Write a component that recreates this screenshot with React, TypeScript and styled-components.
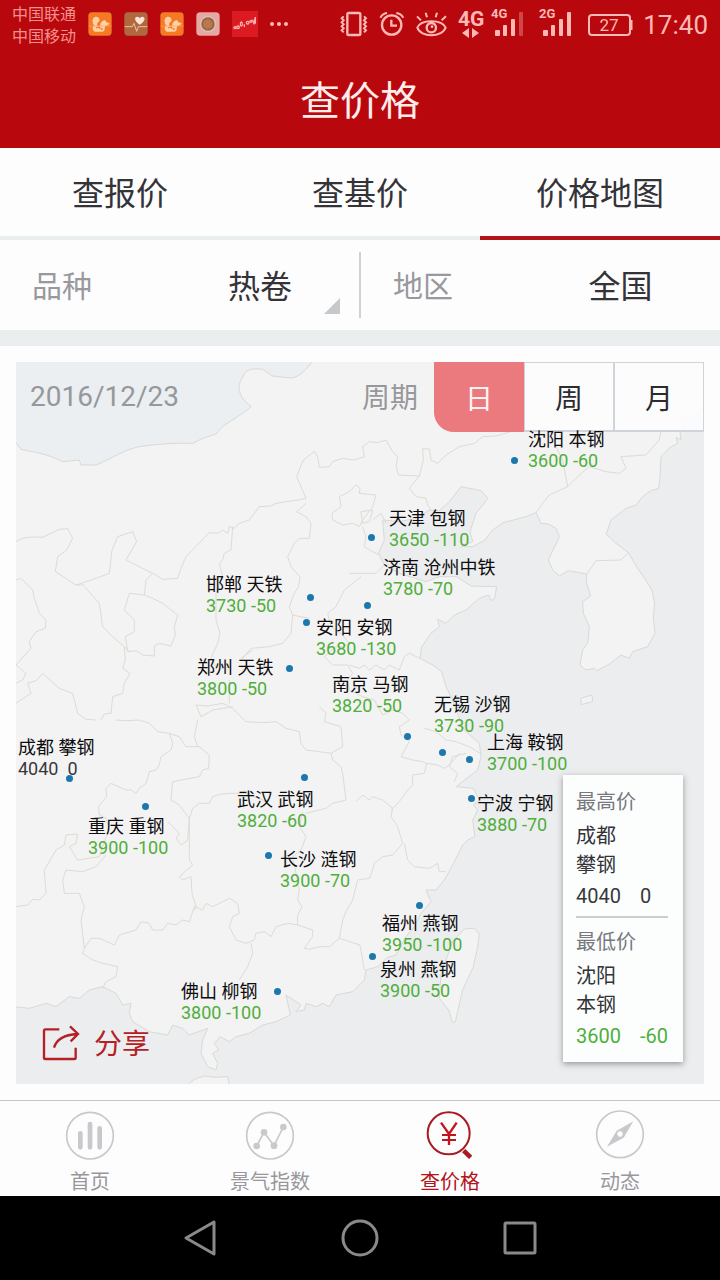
import { useState } from "react";
import styled, { createGlobalStyle } from "styled-components";

const MAP_WIDTH = 688;
const MAP_HEIGHT = 722;

const tabs = ["查报价", "查基价", "价格地图"];
const periods = ["日", "周", "月"];

interface City {
  name: string;
  price: string;
  flat?: boolean;
  dot: [number, number];
  label: [number, number];
}

const cities: City[] = [
  { name: "沈阳 本钢", price: "3600 -60", dot: [499, 99], label: [512, 67] },
  { name: "天津 包钢", price: "3650 -110", dot: [356, 176], label: [373, 146] },
  { name: "济南 沧州中铁", price: "3780 -70", dot: [352, 244], label: [367, 195] },
  { name: "邯郸 天铁", price: "3730 -50", dot: [295, 236], label: [190, 212] },
  { name: "安阳 安钢", price: "3680 -130", dot: [291, 261], label: [300, 255] },
  { name: "郑州 天铁", price: "3800 -50", dot: [274, 307], label: [181, 295] },
  { name: "南京 马钢", price: "3820 -50", dot: [392, 375], label: [316, 312] },
  { name: "无锡 沙钢", price: "3730 -90", dot: [427, 391], label: [418, 332] },
  { name: "上海 鞍钢", price: "3700 -100", dot: [454, 398], label: [471, 370] },
  { name: "宁波 宁钢", price: "3880 -70", dot: [456, 437], label: [461, 431] },
  { name: "成都 攀钢", price: "4040  0", flat: true, dot: [54, 417], label: [2, 375] },
  { name: "重庆 重钢", price: "3900 -100", dot: [130, 445], label: [72, 454] },
  { name: "武汉 武钢", price: "3820 -60", dot: [289, 416], label: [221, 427] },
  { name: "长沙 涟钢", price: "3900 -70", dot: [253, 494], label: [264, 487] },
  { name: "福州 燕钢", price: "3950 -100", dot: [404, 544], label: [366, 551] },
  { name: "泉州 燕钢", price: "3900 -50", dot: [357, 595], label: [364, 597] },
  { name: "佛山 柳钢", price: "3800 -100", dot: [262, 630], label: [165, 619] },
];

// outlines are drawn on a grid three times as fine as the map itself
const mainland =
  "M-10 -10H2080V130L2010 190 1992 215 1995 240 1980 232 1985 250 1962 262 1935 290 1932 350 1928 385 1905 392 1880 410 1860 435 1830 445 1785 480 1775 510 1770 522 1800 550 1837 578 1862 620 1882 650 1908 690 1916 730 1912 770 1917 820 1895 860 1850 875 1840 895 1815 885 1780 912 1742 932 1735 925 1710 930 1692 916 1700 870 1716 848 1720 800 1702 760 1700 725 1724 708 1712 670 1712 642 1690 638 1657 632 1630 648 1610 630 1597 600 1630 530 1620 505 1597 492 1575 490 1560 458 1530 470 1500 478 1462 488 1430 510 1407 540 1370 560 1335 560 1370 545 1362 515 1380 460 1416 415 1395 392 1335 380 1300 425 1270 452 1240 450 1200 475 1150 485 1100 480 1105 540 1087 580 1105 615 1150 640 1230 665 1270 650 1322 650 1365 678 1442 680 1436 715 1425 722 1418 705 1390 715 1350 750 1315 765 1290 790 1265 778 1270 800 1245 820 1217 860 1212 895 1250 915 1277 935 1290 980 1305 1010 1320 1050 1345 1110 1390 1150 1395 1190 1385 1230 1320 1280 1372 1285 1390 1320 1372 1335 1385 1350 1370 1380 1377 1430 1355 1440 1340 1455 1310 1515 1285 1560 1260 1590 1230 1590 1245 1625 1215 1660 1195 1700 1170 1730 1140 1785 1115 1792 1085 1820 1050 1830 1045 1860 1010 1895 960 1905 940 1940 920 1930 900 1940 870 1930 865 1950 840 1955 855 1935 810 1905 823 1965 780 1985 740 1995 700 2020 660 2030 640 2045 612 2030 595 2050 608 2070 590 2080 605 2110 600 2130 575 2120 555 2080 560 2040 575 2005 520 2025 500 2005 470 1995 455 2025 400 2015 350 1985 340 1960 345 1930 320 1935 300 1900 260 1880 220 1890 190 1915 160 1910 120 1940 90 1930 40 1945 -10 1940Z";

const mongolia =
  "M-10 -10H900C865 40 845 52 825 54L770 48 740 28C715 25 690 25 682 48 665 70 665 95 683 120L705 140C695 152 670 165 650 180L625 195 600 222 560 235 530 250C480 248 420 252 370 260 320 270 290 295 240 315L195 315 190 300 140 305C110 290 80 280 50 275L15 268 -10 235Z";

const islands = [
  "M1345 1707 1375 1705 1390 1722 1385 1760 1372 1820 1340 1890 1318 1985 1310 1988 1298 1950 1270 1915 1275 1840 1310 1745Z",
  "M1695 1015 1728 1005 1730 1025 1695 1034Z",
  "M510 2182C530 2155 545 2155 565 2148L600 2152 635 2150 642 2182Z",
];

const borders = [
  // north and the gulf provinces
  "M0 545C20 530 50 530 80 532L130 508 155 506 170 535 152 570 125 590 118 635 180 675 240 655 280 640 288 570 305 530 350 515 362 545 330 600 410 640 440 658 485 655 495 625 510 590 580 518 605 520 620 510 635 520 640 500 655 505 670 490 700 480 730 440 765 438 780 430 845 420 870 415 842 350 862 300 895 275 905 290 910 322 940 320 950 305 980 295 1015 300 1045 290 1040 260 1060 245 1085 248 1110 240 1130 275 1145 290 1140 320 1148 345 1210 348 1222 300 1220 265 1240 268 1245 300 1265 310 1290 285 1330 260 1375 250 1400 230 1440 228 1500 210",
  "M1212 345 1180 385 1200 410 1230 415 1235 435 1245 450M1620 260 1640 300 1655 380 1600 405 1580 430 1560 458M1655 380 1690 345 1720 320 1770 335 1810 340 1830 325 1815 290 1890 285 1930 240 1935 210M1712 642 1740 602 1815 600 1837 578M1400 20 1405 90 1470 120 1500 180",
  "M870 430 842 455 870 470 885 490 880 535 850 535 835 550 815 590 825 620 852 650 848 680 835 700 820 740 830 765 880 775M830 765 825 820 800 850 760 860 705 865 680 895",
  "M650 500 645 570 625 580 620 600 610 610 620 650 600 700 600 780 612 820 605 850 585 895 600 920",
  "M1020 375 1032 385 1030 400 1080 405 1070 440 1040 480 1030 500 1010 490 980 495 950 480 948 460 975 440 970 410 1000 395ZM1035 455 1070 450 1060 485 1040 490ZM1070 480 1095 460 1110 490M1000 640 1080 640 1105 615M1040 500 1050 530 1045 560 1070 575 1090 585M1035 650 985 690 960 740 935 760 945 800 980 825 1000 850 980 860 960 860 925 890 950 915 995 915",
  "M0 660 15 655 50 690 55 715 70 760 90 780 88 805 60 815 40 845 45 865 0 915 30 940 20 960 0 970M205 680 250 730 260 800 290 830 325 860 328 900 320 925 342 940 325 970 320 1000 290 1010 285 1060 265 1062 255 1080M180 675 205 675",
  "M410 640 390 660 385 705 340 700 325 750 355 780 355 815 328 830 335 875 360 872 380 885 415 888 415 858 430 850 465 858 478 825 475 800 485 765 440 730 410 715 385 705M325 860 340 875M0 1030 45 1000 35 970 60 962 80 940 130 985 170 1000 185 1060 210 1078 240 1080",
  // yangtze basin
  "M540 1035 575 1038 620 1030 650 1045 690 1085 740 1088 780 1085 810 1105 850 1115 855 1150 870 1170 910 1175 945 1180 950 1200 975 1220 980 1240 990 1320 950 1330 930 1345 870 1360",
  "M640 1030 640 960M540 1035 555 1070 590 1050 650 1040M675 895 710 870M910 1040 930 1060 925 1085 975 1100 980 1160 945 1180",
  "M1000 915 1030 925 1045 915 1060 930 1080 915 1105 930 1120 915 1150 930 1165 890 1180 880 1212 895M995 915 1010 940 995 960 1000 990 1040 1010 1075 1020 1100 1065 1130 1050 1160 1060 1180 1080 1150 1100 1155 1125 1180 1145 1155 1190 1190 1200 1220 1205 1232 1210",
  "M300 1080 330 1082 370 1080 400 1090 425 1115 460 1120 470 1150 465 1170 435 1190 430 1215 420 1230 400 1235 390 1270 370 1285 360 1300 345 1290 330 1290 285 1270 270 1285 272 1310 247 1340 250 1365 270 1375 280 1410 270 1430 250 1490 185 1500 160 1460 180 1450 185 1422 150 1425 145 1455 120 1470 85 1530 90 1600 70 1620 50 1618 35 1635 0 1640",
  "M460 1120 490 1130 510 1160 550 1160 580 1185 578 1225 560 1230 550 1250 470 1265 465 1320 490 1335 520 1375 515 1440 495 1455 480 1435 490 1420 470 1400 455 1385",
  "M520 1375 530 1345 550 1330 580 1330 590 1310 615 1302 640 1300 690 1300 740 1320 770 1345M545 1160 535 1130 545 1080M520 1375 520 1500 530 1515 490 1550 500 1560 525 1550 528 1600 540 1640 535 1650",
  "M270 1485 240 1520 200 1535 150 1530 140 1560 145 1600 190 1600 205 1640 195 1680 205 1765 225 1735 250 1735 295 1755 310 1725 360 1710 375 1685 400 1690 410 1710 440 1710 455 1690 480 1695 500 1680 520 1685 535 1640 560 1650 570 1630 590 1640 620 1625 640 1615 665 1630 670 1660 650 1670 640 1700 660 1740 690 1750 715 1740 720 1720 745 1715 765 1730 780 1700 815 1690 845 1695",
  "M860 1355 850 1400 870 1430 855 1470 830 1490 850 1590 845 1620 858 1640 845 1665 845 1695 890 1710 890 1730 865 1765 880 1768 910 1760 940 1760 970 1735 980 1680 990 1655 1010 1620 1025 1560 1060 1555 1070 1530 1075 1510 1100 1490 1130 1485 1160 1450 1145 1400 1125 1370 1130 1345 1100 1320 1070 1310 1060 1320 1040 1305 1020 1325",
  "M705 1750 710 1780 695 1820 670 1860M205 1765 200 1780 230 1800 260 1810 305 1820 300 1850 270 1865 260 1885M970 1735 1032 1755 1045 1830",
  "M1125 1350 1150 1325 1175 1290 1190 1275 1190 1245 1225 1240 1232 1210 1265 1215 1285 1225 1300 1215 1330 1180M1165 1450 1175 1500 1195 1520 1240 1525 1265 1510 1270 1535 1290 1535M1225 1105 1260 1115 1290 1140 1320 1145 1360 1160 1392 1180M1315 1265 1325 1240 1300 1220 1310 1190 1350 1180",
];

const GlobalStyle = createGlobalStyle`
  * {
    box-sizing: border-box;
  }

  body {
    margin: 0;
    background: #fdfdfe;
    color: #333338;
    font-family: Roboto, "Noto Sans CJK SC", sans-serif;
  }

  button,
  select {
    margin: 0;
    padding: 0;
    border: 0;
    background: none;
    color: inherit;
    font: inherit;
    cursor: pointer;
  }
`;

const Page = styled.div`
  display: flex;
  flex-direction: column;
  min-height: 100vh;
`;

const TopArea = styled.header`
  background: #b8080e;
  color: #ffb9b4;
`;

const StatusBar = styled.div`
  display: flex;
  align-items: center;
  justify-content: space-between;
  height: 48px;
  padding: 0 12px;
`;

const StatusGroup = styled.div<{ $gap: number }>`
  display: flex;
  align-items: center;
  gap: ${(props) => props.$gap}px;

  svg {
    display: block;
    flex: none;
    overflow: visible;
  }
`;

const Carriers = styled.div`
  padding-top: 4px;
  color: #f5908d;
  font-size: 16px;
  line-height: 22px;
`;

const Clock = styled.time`
  padding-top: 2px;
  font-size: 26px;
  line-height: 32px;
`;

const Title = styled.h1`
  margin: 0;
  height: 100px;
  color: #ffeceb;
  font-size: 40px;
  font-weight: 400;
  line-height: 108px;
  text-align: center;
`;

const Tabs = styled.nav`
  display: grid;
  grid-template-columns: repeat(3, 1fr);
`;

const Tab = styled.button<{ $active: boolean }>`
  height: 92px;
  padding-top: 4px;
  border-bottom: 4px solid ${(props) => (props.$active ? "#b01318" : "#ebeeef")};
  font-size: 32px;
  line-height: 40px;
`;

const Filters = styled.div`
  display: grid;
  grid-template-columns: 1fr 1fr;
  padding: 12px 0;
  border-bottom: 16px solid #ebeeef;
`;

const Filter = styled.div`
  display: flex;
  align-items: center;
  height: 66px;
  padding-left: 32px;

  & + & {
    margin-left: -1px;
    border-left: 2px solid #cfd2d5;
  }
`;

const FilterLabel = styled.label`
  width: 128px;
  padding-top: 4px;
  color: #99999d;
  font-size: 30px;
  line-height: 40px;
`;

const FilterSelect = styled.select`
  flex: 1;
  min-width: 0;
  height: 66px;
  padding-top: 4px;
  appearance: none;
  font-size: 32px;
  text-align: center;
  text-align-last: center;
`;

const Corner = styled.svg`
  align-self: flex-end;
  width: 16px;
  height: 16px;
  margin: 0 20px 4px -36px;
  pointer-events: none;
`;

const MapArea = styled.main`
  position: relative;
  display: flex;
  flex-direction: column;
  justify-content: space-between;
  margin: 16px;
  aspect-ratio: ${MAP_WIDTH} / ${MAP_HEIGHT};
  background: #ebedee;
`;

const MapDrawing = styled.svg`
  position: absolute;
  inset: 0;
  width: 100%;
  height: 100%;
`;

const MapToolbar = styled.div`
  position: relative;
  display: flex;
  align-items: center;
  height: 70px;
  padding-left: 14px;
  color: #96989c;
  font-size: 28px;
  line-height: 32px;
`;

const PeriodLabel = styled.span`
  margin-left: auto;
  padding: 4px 16px 0 0;
`;

const PeriodButton = styled.button<{ $active: boolean }>`
  width: 90px;
  height: 70px;
  padding-top: 6px;
  border: 1px solid ${(props) => (props.$active ? "#ea7a7d" : "#cfd3da")};
  border-bottom-width: 2px;
  border-radius: ${(props) => (props.$active ? "0 0 0 20px" : "0")};
  background: ${(props) => (props.$active ? "#ea7a7d" : "rgba(253, 253, 254, 0.85)")};
  color: ${(props) => (props.$active ? "#fff3f2" : "#2b2b30")};
`;

const Place = styled.div<{ $x: number; $y: number }>`
  position: absolute;
  left: ${(props) => (props.$x / MAP_WIDTH) * 100}%;
  top: ${(props) => (props.$y / MAP_HEIGHT) * 100}%;
`;

const Dot = styled(Place)`
  width: 7px;
  height: 7px;
  margin: -4px 0 0 -4px;
  border-radius: 50%;
  background: #1b78ad;
`;

const CityLabel = styled(Place)`
  color: #0d0d0f;
  font-size: 18px;
  line-height: 21px;
  white-space: pre;
`;

const Price = styled.div<{ $flat?: boolean }>`
  color: ${(props) => (props.$flat ? "#38383c" : "#4fae3c")};
`;

const Share = styled.button`
  position: relative;
  display: flex;
  align-items: center;
  align-self: flex-start;
  gap: 14px;
  height: 40px;
  margin: 0 0 21px 26px;
  color: #b52026;
  font-size: 28px;
  line-height: 32px;

  span {
    padding-top: 4px;
  }
`;

const Summary = styled.aside`
  position: absolute;
  right: 21px;
  bottom: 22px;
  width: 120px;
  padding: 13px 15px 11px 13px;
  background: #fcfefe;
  box-shadow: 0 2px 6px rgba(60, 64, 70, 0.5);
  font-size: 20px;
  line-height: 29px;
`;

const SummaryBlock = styled.section`
  & + & {
    margin-top: 5px;
    padding-top: 10px;
    border-top: 2px solid #cbced0;
  }
`;

const SummaryTitle = styled.h2`
  margin: 0 0 6px;
  color: #77787c;
  font-size: 20px;
  font-weight: 400;
  line-height: 28px;
`;

const SummaryPrice = styled(Price)`
  display: grid;
  grid-template-columns: 64px 1fr;
  padding-top: 2px;
  white-space: nowrap;
`;

const BottomNav = styled.nav`
  display: grid;
  grid-template-columns: 9fr 9fr 9fr 8fr;
  height: 96px;
  padding-right: 20px;
  border-top: 1px solid #c5c5c9;
`;

const NavLink = styled.a<{ $active?: boolean }>`
  display: flex;
  flex-direction: column;
  align-items: center;
  gap: 10px;
  padding-top: 9px;
  color: ${(props) => (props.$active ? "#b3141c" : "#98989c")};
  font-size: 20px;
  line-height: 24px;
  text-decoration: none;

  svg {
    color: ${(props) => (props.$active ? "#a91a22" : "#c9c9cd")};
  }
`;

const SystemBar = styled.footer`
  display: flex;
  flex: 1;
  align-items: center;
  justify-content: center;
  min-height: 84px;
  background: #000;
`;

const SystemButton = styled.button`
  display: flex;
  align-items: center;
  justify-content: center;
  width: 160px;
  height: 84px;
  color: #8a8a8c;
`;

function UcIcon() {
  return (
    <svg width="24" height="24" viewBox="0 0 72 72">
      <rect x="1" y="1" width="70" height="70" rx="11" fill="#f57a26" />
      <path
        d="M14 30C11 15 29 9 34 21 38 31 24 30 28 40 31 45 38 43 37 36 40 28 46 24 52 25L55 31 65 34C62 40 57 41 52 42L50 47C52 52 48 58 44 59H20C10 52 14 43 20 40 15 38 14 34 14 30Z"
        fill="#ffd0a4"
      />
      <path d="M25 48C31 43 36 45 36 51M42 48V54" fill="none" stroke="#f57a26" strokeWidth="4" />
      <path d="M2 42H70" stroke="#f9a568" strokeWidth="2" />
    </svg>
  );
}

function HealthIcon() {
  return (
    <svg width="24" height="24" viewBox="0 0 72 72">
      <rect x="1" y="1" width="70" height="70" rx="11" fill="#b0693f" />
      <path d="M47 38C27 24 33 14 40 14 45 14 47 19 47 19 47 19 50 14 55 14 63 14 67 25 47 38Z" fill="#ffe5d8" />
      <path d="M2 44H25L30 34 38 58 43 44H70" fill="none" stroke="#ebc0a1" strokeWidth="3" />
    </svg>
  );
}

function CameraIcon() {
  return (
    <svg width="24" height="24" viewBox="0 0 72 72">
      <rect x="1" y="1" width="70" height="70" rx="12" fill="#e5a8a4" />
      <circle cx="36" cy="36" r="24" fill="#d9c4b8" />
      <circle cx="36" cy="36" r="20" fill="#a0603c" />
      <path d="M22 28 36 20 50 30 48 46 34 52 22 44Z" fill="#b97850" />
    </svg>
  );
}

function TrendIcon() {
  return (
    <svg width="26" height="26" viewBox="0 0 78 78">
      <rect width="78" height="78" fill="#dc1a22" />
      <g fill="none" stroke="#ffb0aa" strokeWidth="4">
        <circle cx="9" cy="50" r="3" />
        <circle cx="18" cy="49" r="4" />
        <ellipse cx="28" cy="39" rx="3" ry="6" />
        <path d="M37 40V48" />
        <circle cx="47" cy="35" r="4" />
        <circle cx="57" cy="31" r="3" />
        <path d="M62 26 66 40 70 18V38" />
      </g>
    </svg>
  );
}

function DotsIcon() {
  return (
    <svg width="19" height="6" viewBox="0 0 19 6" fill="currentColor">
      <circle cx="2" cy="3" r="2" />
      <circle cx="9" cy="3" r="2" />
      <circle cx="16" cy="3" r="2" />
    </svg>
  );
}

function VibrateIcon() {
  return (
    <svg width="28" height="26" viewBox="0 0 84 78" fill="none" stroke="currentColor" strokeWidth="6">
      <rect x="22" y="6" width="39" height="66" rx="4" strokeWidth="7" />
      <path d="M11 16 5 22 11 28 5 34 11 40 5 46 11 52 5 58 11 64M72 16 78 22 72 28 78 34 72 40 78 46 72 52 78 58 72 64" />
    </svg>
  );
}

function AlarmIcon() {
  return (
    <svg width="26" height="26" viewBox="0 0 78 78" fill="none" stroke="currentColor" strokeWidth="7">
      <circle cx="38" cy="42" r="29" />
      <path d="M37 26V44H54" />
      <path d="M4 20C10 10 16 7 24 6M52 6C60 7 68 12 73 20" strokeWidth="6" />
    </svg>
  );
}

function EyeIcon() {
  return (
    <svg width="31" height="26" viewBox="0 0 93 78" fill="none" stroke="currentColor" strokeWidth="6">
      <path d="M4 50C14 24 78 24 89 50 78 80 14 80 4 50Z" />
      <circle cx="46" cy="50" r="14" strokeWidth="7" />
      <circle cx="48" cy="47" r="4" fill="currentColor" stroke="none" />
      <path d="M15 28 3 16M33 19 29 5M59 19 63 5M77 28 90 16" />
    </svg>
  );
}

function DataIcon() {
  return (
    <svg width="22" height="32" viewBox="0 0 22 32" fill="currentColor">
      <text x="0" y="18" fontSize="21" fontWeight="700">
        4G
      </text>
      <path d="M4 25 11 20V30ZM21 25 14 20V30Z" />
    </svg>
  );
}

function SignalIcon({ type, weak }: { type: string; weak?: boolean }) {
  return (
    <svg width="37" height="32" viewBox="0 0 37 32" fill="currentColor">
      <text x="0" y="10" fontSize="13" fontWeight="700">
        {type}
      </text>
      <rect x="4" y="22" width="5" height="6" rx="1" />
      <rect x="12" y="17" width="4" height="11" rx="1" />
      <rect x="20" y="11" width="4" height="17" rx="1" />
      <rect x="28" y="4" width="4" height="24" rx="1" opacity={weak ? 0.35 : 1} />
    </svg>
  );
}

function BatteryIcon() {
  return (
    <svg width="45" height="24" viewBox="0 0 45 24" fill="none" stroke="currentColor" strokeWidth="2">
      <rect x="2" y="3" width="41" height="20" rx="3" />
      <path d="M44 8V18" strokeWidth="3" />
      <text x="22" y="19" fontSize="17" fill="currentColor" stroke="none" textAnchor="middle">
        27
      </text>
    </svg>
  );
}

function ShareIcon() {
  return (
    <svg width="38" height="36" viewBox="0 0 114 108" fill="none" stroke="currentColor" strokeWidth="7">
      <path d="M52 13H10Q6 13 6 17V98Q6 102 10 102H97Q101 102 101 98V68" />
      <path d="M36 68C43 45 66 29 106 27M84 4 108 27 86 49" />
    </svg>
  );
}

function BarsIcon() {
  return (
    <svg width="50" height="50" viewBox="0 0 150 150" fill="none" stroke="currentColor">
      <circle cx="75" cy="77" r="70" strokeWidth="5" />
      <path d="M46 70V112M75 42V112M104 55V112" strokeWidth="14" strokeLinecap="round" />
    </svg>
  );
}

function TrendNavIcon() {
  return (
    <svg width="50" height="50" viewBox="0 0 150 150" fill="none" stroke="currentColor">
      <circle cx="75" cy="77" r="70" strokeWidth="5" />
      <path d="M35 108 57 67 87 107 115 51" strokeWidth="5" />
      <g fill="currentColor" stroke="none">
        <circle cx="35" cy="108" r="10" />
        <circle cx="57" cy="67" r="10" />
        <circle cx="87" cy="107" r="10" />
        <circle cx="115" cy="51" r="10" />
      </g>
    </svg>
  );
}

function PriceSearchIcon() {
  return (
    <svg width="50" height="50" viewBox="0 0 150 150" fill="none" stroke="currentColor">
      <circle cx="71" cy="70" r="63" strokeWidth="6" />
      <path d="M116 122 137 142" strokeWidth="14" />
      <g stroke="#c3141d" strokeWidth="7">
        <path d="M48 38 72 72 95 38M72 72V105" />
        <path d="M51 75H93M51 90H93" strokeWidth="6" />
      </g>
    </svg>
  );
}

function CompassIcon() {
  return (
    <svg width="50" height="50" viewBox="0 0 150 150" fill="none" stroke="currentColor">
      <circle cx="75" cy="73" r="70" strokeWidth="5" />
      <path d="M115 34 86 83 36 110 65 62Z" fill="currentColor" stroke="none" />
      <circle cx="75" cy="72" r="8" fill="#fdfdfe" stroke="none" />
    </svg>
  );
}

const navItems = [
  { label: "首页", icon: <BarsIcon /> },
  { label: "景气指数", icon: <TrendNavIcon /> },
  { label: "查价格", icon: <PriceSearchIcon />, active: true },
  { label: "动态", icon: <CompassIcon /> },
];

function PriceMap() {
  const [period, setPeriod] = useState("日");

  return (
    <MapArea>
      <MapDrawing viewBox="0 6 2064 2166" aria-hidden="true">
        <g fill="#f4f3f3" stroke="#d9d9d7" strokeWidth="3" strokeLinejoin="round">
          <path d={mainland} />
          {islands.map((d) => (
            <path key={d} d={d} />
          ))}
          <path d={mongolia} fill="#ebeff1" />
          <g fill="none">
            {borders.map((d) => (
              <path key={d} d={d} stroke="#dcdbd4" />
            ))}
          </g>
        </g>
      </MapDrawing>

      <MapToolbar>
        <time>2016/12/23</time>
        <PeriodLabel>周期</PeriodLabel>
        {periods.map((item) => (
          <PeriodButton
            key={item}
            $active={item === period}
            aria-pressed={item === period}
            onClick={() => setPeriod(item)}
          >
            {item}
          </PeriodButton>
        ))}
      </MapToolbar>

      {cities.map((city) => (
        <CityLabel key={city.name} $x={city.label[0]} $y={city.label[1]}>
          {city.name}
          <Price $flat={city.flat}>{city.price}</Price>
        </CityLabel>
      ))}
      {cities.map((city) => (
        <Dot key={city.name} $x={city.dot[0]} $y={city.dot[1]} />
      ))}

      <Share>
        <ShareIcon />
        <span>分享</span>
      </Share>

      <Summary>
        <SummaryBlock>
          <SummaryTitle>最高价</SummaryTitle>
          <div>成都</div>
          <div>攀钢</div>
          <SummaryPrice $flat>
            <span>4040</span>
            <span>0</span>
          </SummaryPrice>
        </SummaryBlock>
        <SummaryBlock>
          <SummaryTitle>最低价</SummaryTitle>
          <div>沈阳</div>
          <div>本钢</div>
          <SummaryPrice>
            <span>3600</span>
            <span>-60</span>
          </SummaryPrice>
        </SummaryBlock>
      </Summary>
    </MapArea>
  );
}

export default function App() {
  const [tab, setTab] = useState("价格地图");

  return (
    <Page>
      <GlobalStyle />
      <TopArea>
        <StatusBar>
          <StatusGroup $gap={12}>
            <Carriers>
              <div>中国联通</div>
              <div>中国移动</div>
            </Carriers>
            <UcIcon />
            <HealthIcon />
            <UcIcon />
            <CameraIcon />
            <TrendIcon />
            <DotsIcon />
          </StatusGroup>
          <StatusGroup $gap={11}>
            <VibrateIcon />
            <AlarmIcon />
            <EyeIcon />
            <DataIcon />
            <SignalIcon type="4G" weak />
            <SignalIcon type="2G" />
            <BatteryIcon />
            <Clock>17:40</Clock>
          </StatusGroup>
        </StatusBar>
        <Title>查价格</Title>
      </TopArea>

      <Tabs>
        {tabs.map((item) => (
          <Tab key={item} $active={item === tab} onClick={() => setTab(item)}>
            {item}
          </Tab>
        ))}
      </Tabs>

      <Filters>
        <Filter>
          <FilterLabel htmlFor="variety">品种</FilterLabel>
          <FilterSelect id="variety">
            <option>热卷</option>
          </FilterSelect>
          <Corner viewBox="0 0 16 16">
            <path d="M16 0V16H0Z" fill="#c5c9cc" />
          </Corner>
        </Filter>
        <Filter>
          <FilterLabel htmlFor="region">地区</FilterLabel>
          <FilterSelect id="region">
            <option>全国</option>
          </FilterSelect>
        </Filter>
      </Filters>

      <PriceMap />

      <BottomNav>
        {navItems.map((item) => (
          <NavLink key={item.label} href="#" $active={item.active}>
            {item.icon}
            {item.label}
          </NavLink>
        ))}
      </BottomNav>

      <SystemBar>
        <SystemButton aria-label="返回">
          <svg width="40" height="40" viewBox="0 0 40 40" fill="none" stroke="currentColor" strokeWidth="3">
            <path d="M34 4V36L6 20Z" strokeLinejoin="round" />
          </svg>
        </SystemButton>
        <SystemButton aria-label="主页">
          <svg width="40" height="40" viewBox="0 0 40 40" fill="none" stroke="currentColor" strokeWidth="3">
            <circle cx="20" cy="20" r="17" />
          </svg>
        </SystemButton>
        <SystemButton aria-label="最近任务">
          <svg width="40" height="40" viewBox="0 0 40 40" fill="none" stroke="currentColor" strokeWidth="3">
            <rect x="5" y="5" width="30" height="30" rx="1" />
          </svg>
        </SystemButton>
      </SystemBar>
    </Page>
  );
}
